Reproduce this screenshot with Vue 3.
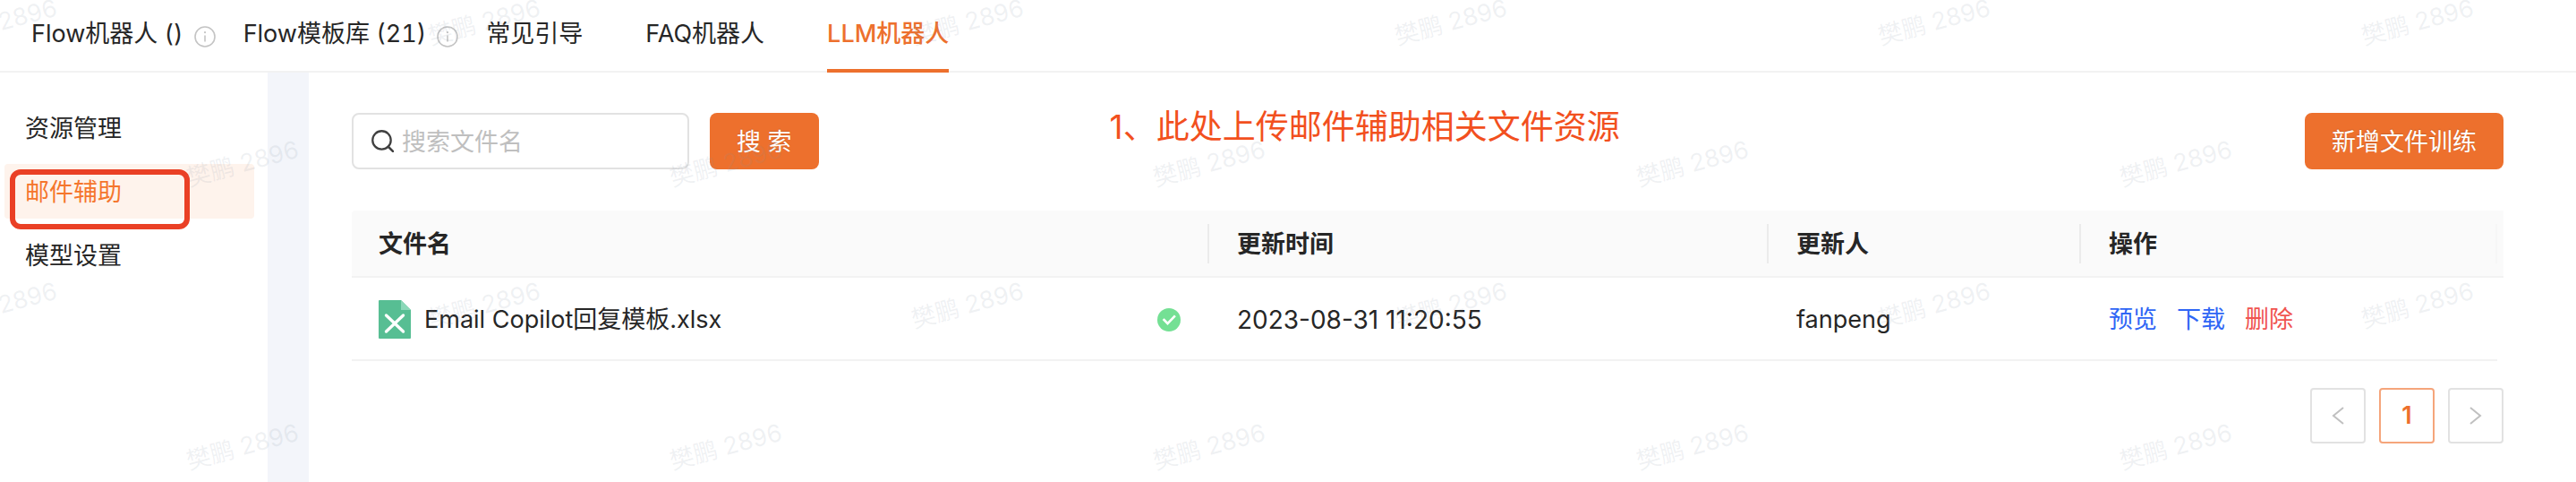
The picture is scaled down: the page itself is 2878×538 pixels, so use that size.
<script setup>
import { ref } from 'vue'

const tabs = [
  { label: 'Flow机器人 ()', info: true },
  { label: 'Flow模板库 (21)', info: true },
  { label: '常见引导' },
  { label: 'FAQ机器人' },
  { label: 'LLM机器人', active: true },
]

const menu = [
  { label: '资源管理' },
  { label: '邮件辅助', active: true },
  { label: '模型设置' },
]

const files = [
  { name: 'Email Copilot回复模板.xlsx', time: '2023-08-31 11:20:55', user: 'fanpeng' },
]

const keyword = ref('')
const markRows = [6, 5, 6, 5]
</script>

<template>
  <div class="page">
    <nav class="tabs">
      <a
        v-for="tab in tabs"
        :key="tab.label"
        href="#"
        class="tab"
        :class="{ active: tab.active, compact: tab.info }"
      >
        <span>{{ tab.label }}</span>
        <svg v-if="tab.info" class="info" viewBox="0 0 24 24" aria-hidden="true">
          <circle cx="12" cy="12" r="11" fill="none" stroke="#c4c4c4" stroke-width="1.6" />
          <circle cx="12" cy="7.2" r="1.1" fill="#c4c4c4" />
          <path d="M12 10.4v7.2" stroke="#c4c4c4" stroke-width="1.6" />
        </svg>
      </a>
    </nav>

    <div class="body">
      <aside class="sidebar">
        <a
          v-for="item in menu"
          :key="item.label"
          href="#"
          class="menu-item"
          :class="{ active: item.active }"
        >
          {{ item.label }}
          <span v-if="item.active" class="marker"></span>
        </a>
      </aside>

      <main class="main">
        <div class="toolbar">
          <label class="search">
            <svg class="search-icon" viewBox="0 0 24 24" aria-hidden="true">
              <circle cx="11" cy="11" r="9.8" fill="none" stroke="#404040" stroke-width="2.2" />
              <path d="M18 18l5 5" stroke="#404040" stroke-width="2.4" stroke-linecap="round" />
            </svg>
            <input v-model="keyword" type="text" placeholder="搜索文件名" aria-label="搜索文件名" />
          </label>
          <button type="button" class="primary">搜 索</button>
          <p class="note">1、此处上传邮件辅助相关文件资源</p>
          <button type="button" class="primary add">新增文件训练</button>
        </div>

        <table class="table">
          <colgroup>
            <col />
            <col class="c-time" />
            <col class="c-user" />
            <col class="c-actions" />
            <col class="c-end" />
          </colgroup>
          <thead>
            <tr>
              <th>文件名</th>
              <th>更新时间</th>
              <th>更新人</th>
              <th class="last">操作</th>
              <th class="end"></th>
            </tr>
          </thead>
          <tbody>
            <tr v-for="file in files" :key="file.name">
              <td>
                <div class="file">
                  <svg class="file-icon" viewBox="0 0 36 43" aria-hidden="true">
                    <path d="M1 0H25L36 11V42a1 1 0 0 1-1 1H1a1 1 0 0 1-1-1V1a1 1 0 0 1 1-1z" fill="#57be93" />
                    <path d="M25 0L36 11H25z" fill="#8ad8b8" />
                    <path d="M8.5 17L27.500 35M27.500 17L8.500 35" stroke="#fff" stroke-width="3.4" stroke-linecap="round" />
                  </svg>
                  <span class="file-name">{{ file.name }}</span>
                  <svg class="ok" viewBox="0 0 26 26" aria-hidden="true">
                    <circle cx="13" cy="13" r="13" fill="#74e094" />
                    <path d="M7.500 13l4 4.200L19 9.400" fill="none" stroke="#fff" stroke-width="2.600" stroke-linecap="square" />
                  </svg>
                </div>
              </td>
              <td class="time">{{ file.time }}</td>
              <td>{{ file.user }}</td>
              <td>
                <div class="actions">
                  <a href="#">预览</a>
                  <a href="#">下载</a>
                  <a href="#" class="danger">删除</a>
                </div>
              </td>
              <td class="end"></td>
            </tr>
          </tbody>
        </table>

        <div class="pager">
          <button type="button" class="page-btn" aria-label="上一页">
            <svg viewBox="0 0 14 20" aria-hidden="true"><path d="M13 1L2 10l11 9" /></svg>
          </button>
          <button type="button" class="page-btn current">1</button>
          <button type="button" class="page-btn" aria-label="下一页">
            <svg viewBox="0 0 14 20" aria-hidden="true"><path d="M1 1l11 9-11 9" /></svg>
          </button>
        </div>
      </main>
    </div>

    <div class="watermark" aria-hidden="true">
      <div v-for="(count, row) in markRows" :key="row" class="mark-row" :class="{ shifted: row % 2 }">
        <div v-for="n in count" :key="n" class="mark-cell"><span>樊鹏 2896</span></div>
      </div>
    </div>
  </div>
</template>

<style>
body {
  margin: 0;
  background: #fff;
}
</style>

<style scoped>
.page {
  position: relative;
  box-sizing: border-box;
  min-height: 100vh;
  display: flex;
  flex-direction: column;
  overflow: hidden;
  background: #fff;
  color: #262626;
  font-family: Inter, "Noto Sans CJK SC", sans-serif;
  font-size: 27px;
  line-height: 30px;
}
a {
  color: inherit;
  text-decoration: none;
}
button,
input {
  font: inherit;
}
.tabs {
  box-sizing: border-box;
  height: 81px;
  display: flex;
  gap: 70px;
  padding-left: 35px;
  border-bottom: 2px solid #f2f2f2;
  font-variant-numeric: tabular-nums;
}
.tab {
  box-sizing: border-box;
  height: 81px;
  display: flex;
  align-items: flex-end;
  gap: 12px;
  padding-bottom: 28px;
  white-space: nowrap;
}
.tab.compact {
  margin-right: -39px;
}
.tab.active {
  color: #ed702d;
  border-bottom: 4px solid #ed702d;
  padding-bottom: 24px;
  font-weight: 500;
}
.info {
  width: 24px;
  height: 24px;
}
.body {
  flex: 1;
  display: flex;
}
.sidebar {
  box-sizing: border-box;
  width: 345px;
  flex: none;
  display: flex;
  flex-direction: column;
  gap: 10px;
  padding: 31px 15px 0 5px;
  border-right: 46px solid #f3f5fa;
}
.menu-item {
  position: relative;
  height: 61px;
  line-height: 64px;
  padding-left: 23px;
  border-radius: 4px;
}
.menu-item.active {
  background: #fef3ec;
  color: #f5762c;
}
.marker {
  position: absolute;
  left: 6px;
  top: 6px;
  box-sizing: border-box;
  width: 201px;
  height: 67px;
  border: 6px solid #ea4025;
  border-radius: 12px;
}
.main {
  flex: 1;
  min-width: 0;
  padding: 45px 81px 0 48px;
}
.toolbar {
  display: flex;
  align-items: center;
  margin-bottom: 46px;
}
.search {
  box-sizing: border-box;
  width: 377px;
  height: 63px;
  display: flex;
  align-items: center;
  gap: 9px;
  padding: 0 20px;
  margin-right: 23px;
  border: 2px solid #e2e2e2;
  border-radius: 8px;
}
.search-icon {
  width: 25px;
  height: 25px;
  flex: none;
}
.search input {
  flex: 1;
  min-width: 0;
  padding: 2px 0 0;
  border: 0;
  outline: 0;
  background: none;
  color: #262626;
}
.search input::placeholder {
  color: #bfbfbf;
  opacity: 1;
}
.primary {
  height: 63px;
  padding: 2px 30px 0;
  border: 0;
  border-radius: 8px;
  background: #ed702d;
  color: #fff;
  text-shadow: 0 -1px 1px rgba(0, 0, 0, 0.14);
  white-space: nowrap;
}
.note {
  flex: 1;
  margin: -31px 0 0 325px;
  color: #f2501e;
  font-size: 37px;
  line-height: 40px;
  white-space: nowrap;
}
.table {
  width: 100%;
  table-layout: fixed;
  border-collapse: separate;
  border-spacing: 0;
}
.c-time {
  width: 26%;
}
.c-user {
  width: 349px;
}
.c-actions {
  width: 465px;
}
.c-end {
  width: 7px;
}
.table th,
.table td {
  box-sizing: border-box;
  padding: 2px 32px 0 31px;
  text-align: left;
  border-bottom: 2px solid #f2f2f2;
}
.table th:first-child,
.table td:first-child {
  padding-left: 30px;
}
.table th {
  position: relative;
  height: 75px;
  background: #fafafa;
  font-weight: 600;
}
.table th:not(.end)::after {
  content: "";
  position: absolute;
  right: 0;
  top: 15px;
  width: 2px;
  height: 44px;
  background: #ebebeb;
}
.table th.last::after {
  background: #f6f6f6;
}
.table th:first-child {
  border-top-left-radius: 4px;
}
.table td {
  height: 93px;
}
.table .time {
  font-size: 28px;
}
.table .end {
  padding: 0;
}
.table td.end {
  border-bottom-color: transparent;
}
.file {
  display: flex;
  align-items: center;
  gap: 15px;
}
.file-icon {
  width: 36px;
  height: 43px;
  flex: none;
}
.file-name {
  flex: 1;
}
.ok {
  width: 26px;
  height: 26px;
}
.actions {
  display: flex;
  gap: 22px;
  color: #2f66f5;
}
.danger {
  color: #f0544f;
}
.pager {
  display: flex;
  justify-content: flex-end;
  gap: 15px;
  margin-top: 30px;
}
.page-btn {
  box-sizing: border-box;
  width: 62px;
  height: 62px;
  display: flex;
  align-items: center;
  justify-content: center;
  padding: 0;
  border: 2px solid #e2e2e2;
  border-radius: 4px;
  background: #fff;
}
.page-btn svg {
  width: 14px;
  height: 20px;
  fill: none;
  stroke: #c0c0c0;
  stroke-width: 2;
}
.page-btn.current {
  border-color: #f5a57b;
  color: #ed702d;
  font-weight: 600;
}
.watermark {
  position: absolute;
  inset: 0;
  overflow: hidden;
  pointer-events: none;
  color: rgba(130, 145, 160, 0.13);
}
.mark-row {
  display: flex;
  height: 158px;
  margin-left: -269px;
}
.mark-row:first-child {
  margin-top: -54px;
}
.mark-row.shifted {
  margin-left: 1px;
}
.mark-cell {
  flex: none;
  width: 540px;
  display: flex;
  align-items: center;
  justify-content: center;
}
.mark-cell span {
  transform: rotate(-15deg);
}
</style>
